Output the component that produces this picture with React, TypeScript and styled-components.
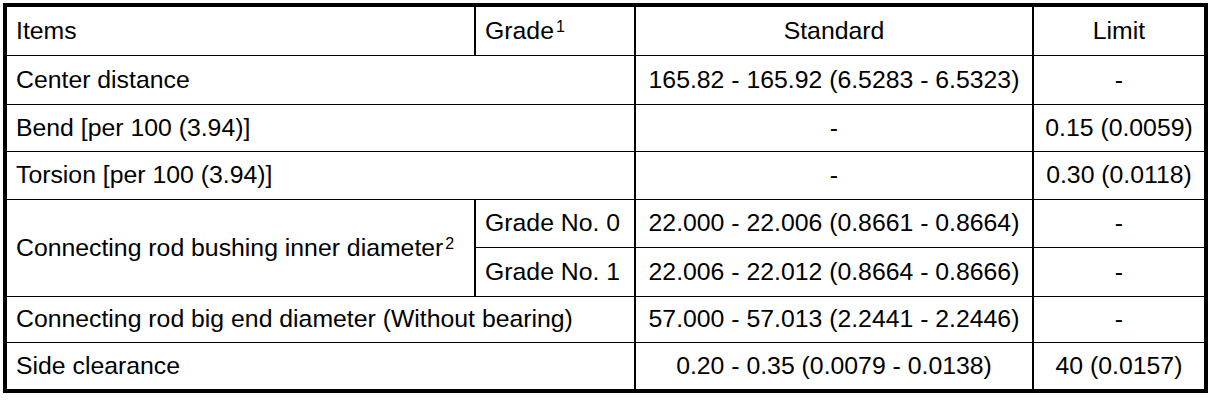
import React from "react";
import styled, { createGlobalStyle } from "styled-components";

const Global = createGlobalStyle`
  html, body { margin: 0; padding: 0; background: #fff; }
  body { font-family: "Liberation Sans", Arial, Helvetica, sans-serif; color: #000; }
`;

const Sheet = styled.div`
  margin: 3px 0 0 3px;
  width: 1205px;
  box-sizing: border-box;
  border: 4px solid #000;
  background: #000;
  display: grid;
  grid-template-columns: 467px 158px 396px 170px;
  grid-template-rows: 48px 48px 46px 47px 47px 48px 45px 46px;
  column-gap: 2px;
  row-gap: 1px;
`;

const Cell = styled.div<{ $center?: boolean; $cols?: number; $rows?: number }>`
  background: #fff;
  display: flex;
  align-items: center;
  justify-content: ${(p) => (p.$center ? "center" : "flex-start")};
  padding: 0 9px;
  font-size: 24.8px;
  line-height: 1;
  white-space: nowrap;
  grid-column: span ${(p) => p.$cols ?? 1};
  grid-row: span ${(p) => p.$rows ?? 1};
`;

const Sup = styled.sup`
  font-size: 16px;
  line-height: 0;
  position: relative;
  top: -4px;
  margin-left: 2px;
`;

type Row = {
  item: React.ReactNode;
  standard: string;
  limit: string;
};

const rows: Row[] = [
  { item: "Center distance", standard: "165.82 - 165.92 (6.5283 - 6.5323)", limit: "-" },
  { item: "Bend [per 100 (3.94)]", standard: "-", limit: "0.15 (0.0059)" },
  { item: "Torsion [per 100 (3.94)]", standard: "-", limit: "0.30 (0.0118)" },
];

const tail: Row[] = [
  {
    item: "Connecting rod big end diameter (Without bearing)",
    standard: "57.000 - 57.013 (2.2441 - 2.2446)",
    limit: "-",
  },
  { item: "Side clearance", standard: "0.20 - 0.35 (0.0079 - 0.0138)", limit: "40 (0.0157)" },
];

const renderSimple = (r: Row, i: number, prefix: string) => (
  <React.Fragment key={prefix + i}>
    <Cell $cols={2}>{r.item}</Cell>
    <Cell $center>{r.standard}</Cell>
    <Cell $center>{r.limit}</Cell>
  </React.Fragment>
);

export default function App() {
  return (
    <>
      <Global />
      <Sheet>
        <Cell>Items</Cell>
        <Cell>
          Grade<Sup>1</Sup>
        </Cell>
        <Cell $center>Standard</Cell>
        <Cell $center>Limit</Cell>

        {rows.map((r, i) => renderSimple(r, i, "a"))}

        <Cell $rows={2}>
          Connecting rod bushing inner diameter<Sup>2</Sup>
        </Cell>
        <Cell>Grade No. 0</Cell>
        <Cell $center>22.000 - 22.006 (0.8661 - 0.8664)</Cell>
        <Cell $center>-</Cell>
        <Cell>Grade No. 1</Cell>
        <Cell $center>22.006 - 22.012 (0.8664 - 0.8666)</Cell>
        <Cell $center>-</Cell>

        {tail.map((r, i) => renderSimple(r, i, "b"))}
      </Sheet>
    </>
  );
}
